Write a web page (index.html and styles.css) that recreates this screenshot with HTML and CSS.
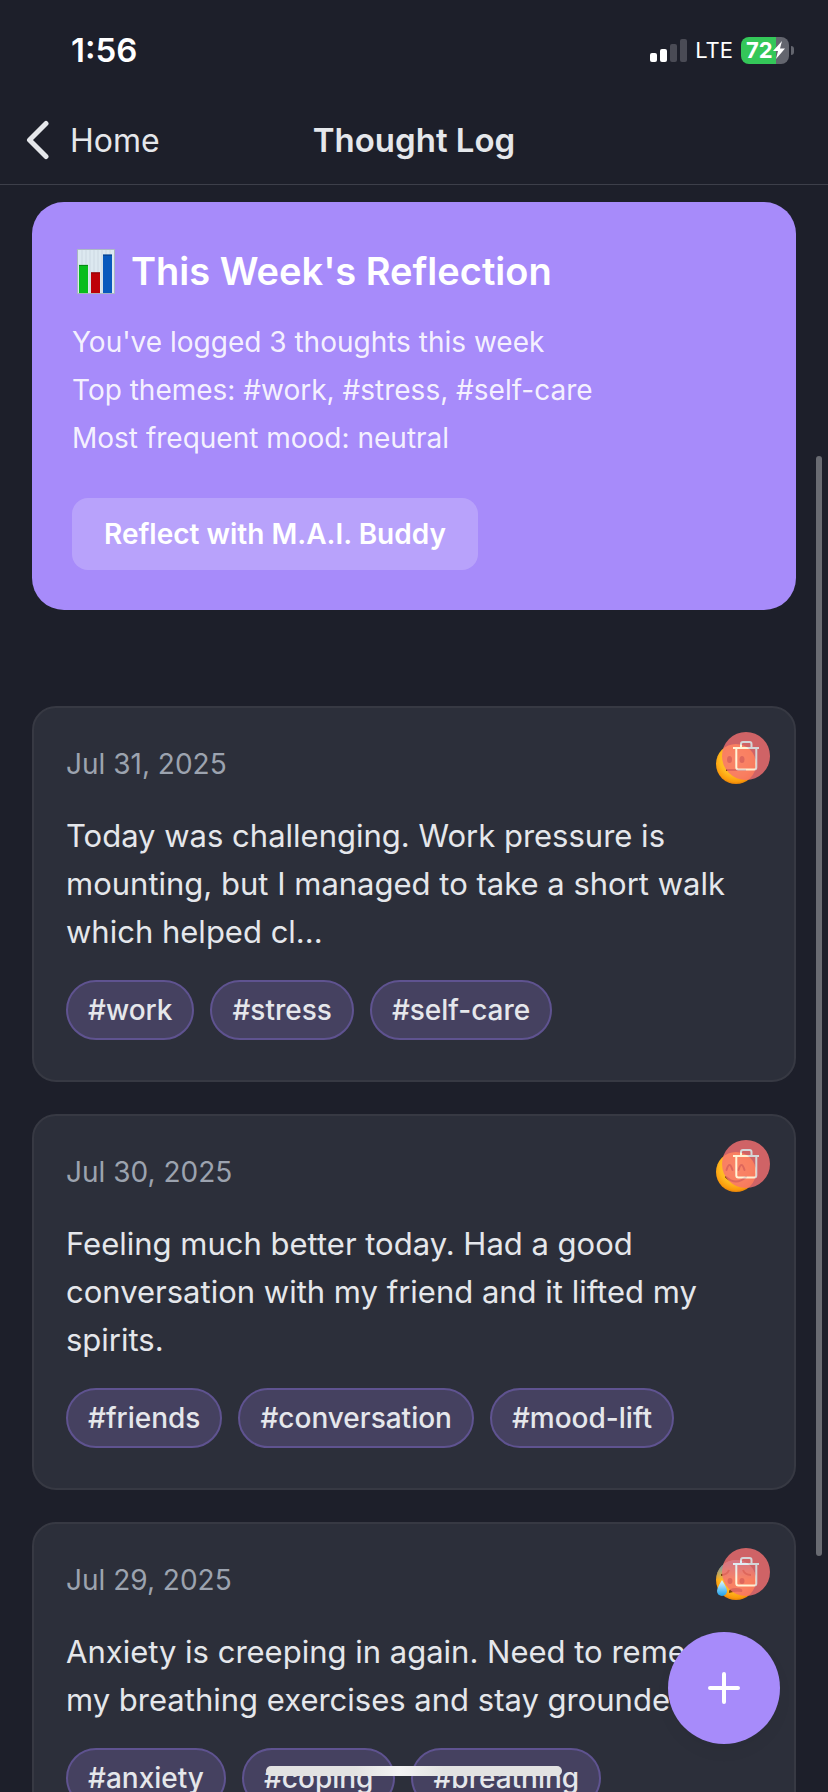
FILE: index.html
```html
<!DOCTYPE html>
<html lang="en">
<head>
<meta charset="utf-8">
<meta name="viewport" content="width=device-width, initial-scale=1">
<title>Thought Log</title>
<link rel="stylesheet" href="styles.css">
</head>
<body>
<svg class="defs" aria-hidden="true">
  <defs>
    <radialGradient id="face" cx="50%" cy="40%" r="62%">
      <stop offset="0" stop-color="#ffd84a"/>
      <stop offset="0.65" stop-color="#ffb91f"/>
      <stop offset="0.88" stop-color="#fb9a0c"/>
      <stop offset="1" stop-color="#d97706"/>
    </radialGradient>
    <linearGradient id="cold" x1="0" y1="0" x2="0" y2="1">
      <stop offset="0" stop-color="#3f8fe8"/>
      <stop offset="0.5" stop-color="#3f8fe8" stop-opacity="0"/>
    </linearGradient>
    <linearGradient id="drop" x1="0" y1="0" x2="0" y2="1">
      <stop offset="0" stop-color="#e8fbff"/>
      <stop offset="1" stop-color="#1ba1ea"/>
    </linearGradient>
    <symbol id="trash" viewBox="0 0 48 48">
      <path d="M11 16h26M14.300 16v19.500q0 2 2 2h16q2 0 2-2V16M19 15v-3q0-2 2-2h6.500q2 0 2 2v3" fill="none" stroke="#fff" stroke-width="2"/>
    </symbol>
  </defs>
</svg>
<div class="app">
  <header class="header">
    <div class="status">
      <span class="time">1:56</span>
      <div class="status-right">
        <svg class="signal" viewBox="0 0 37 23" aria-hidden="true">
          <rect x="0" y="14" width="7" height="9" rx="2" fill="#fff"/>
          <rect x="10" y="10" width="7" height="13" rx="2" fill="#fff"/>
          <rect x="20" y="5" width="7" height="18" rx="2" fill="#4a4b55"/>
          <rect x="30" y="0" width="7" height="23" rx="2" fill="#4a4b55"/>
        </svg>
        <span class="network">LTE</span>
        <div class="battery">
          <span class="level">72</span>
          <svg class="bolt" viewBox="0 0 12 18" aria-hidden="true"><path d="M9 0 0 10h5L3 18l9-10.500H7z" fill="#fff"/></svg>
        </div>
      </div>
    </div>
    <nav class="nav">
      <a class="back" href="#">
        <svg class="chevron" viewBox="0 0 24 40" aria-hidden="true"><path d="M20 3.500 3.500 20 20 36.500" fill="none" stroke="currentColor" stroke-width="5" stroke-linecap="round" stroke-linejoin="round"/></svg>
        <span>Home</span>
      </a>
      <h1 class="title">Thought Log</h1>
    </nav>
  </header>

  <main class="content">
    <section class="summary">
      <h2 class="summary-title">
        <svg class="chart" viewBox="0 0 38 48" preserveAspectRatio="none" aria-hidden="true">
          <rect width="38" height="48" fill="#a9b6c2"/>
          <rect x="1" y="1" width="36" height="46" fill="#dce8f0"/>
          <path d="M5 1v46M9 1v46M13 1v46M17 1v46M21 1v46M25 1v46M29 1v46M33 1v46" stroke="#cbd8e2" stroke-width="1"/>
          <rect x="2" y="17" width="9" height="30" fill="#08bd1c"/><rect x="2" y="17" width="9" height="1" fill="#078314"/>
          <rect x="14" y="25" width="9" height="22" fill="#bd0208"/><rect x="14" y="25" width="9" height="1" fill="#810307"/>
          <rect x="26" y="6" width="9" height="41" fill="#0758bd"/><rect x="26" y="6" width="9" height="1" fill="#053a80"/>
        </svg>
        <span>This Week's Reflection</span>
      </h2>
      <p class="summary-line">You've logged 3 thoughts this week</p>
      <p class="summary-line">Top themes: #work, #stress, #self-care</p>
      <p class="summary-line">Most frequent mood: neutral</p>
      <button class="reflect" type="button">Reflect with M.A.I. Buddy</button>
    </section>

    <section class="entries">
      <article class="entry">
        <div class="entry-head">
          <time class="date" datetime="2025-07-31">Jul 31, 2025</time>
          <svg class="mood" viewBox="0 0 40 40" role="img" aria-label="neutral">
            <circle cx="20" cy="20" r="20" fill="url(#face)"/>
            <ellipse cx="13.500" cy="15.500" rx="2.500" ry="3.500" fill="#7a4208"/><ellipse cx="26" cy="15.500" rx="2.500" ry="3.500" fill="#7a4208"/>
            <path d="M10 26h20" stroke="#7a4208" stroke-width="2"/>
          </svg>
        </div>
        <button class="delete" type="button" aria-label="Delete entry"><svg class="trash" aria-hidden="true"><use href="#trash"/></svg></button>
        <p class="text">Today was challenging. Work pressure is mounting, but I managed to take a short walk which helped cl...</p>
        <div class="tags"><span class="tag">#work</span><span class="tag">#stress</span><span class="tag">#self-care</span></div>
      </article>

      <article class="entry">
        <div class="entry-head">
          <time class="date" datetime="2025-07-30">Jul 30, 2025</time>
          <svg class="mood" viewBox="0 0 40 40" role="img" aria-label="happy">
            <circle cx="20" cy="20" r="20" fill="url(#face)"/>
            <path d="M10.500 18q3-10 6 0M22.500 18q3-10 6 0M10 25q10 9 20 0" fill="none" stroke="#7a4208" stroke-width="2" stroke-linecap="round"/>
          </svg>
        </div>
        <button class="delete" type="button" aria-label="Delete entry"><svg class="trash" aria-hidden="true"><use href="#trash"/></svg></button>
        <p class="text">Feeling much better today. Had a good conversation with my friend and it lifted my spirits.</p>
        <div class="tags"><span class="tag">#friends</span><span class="tag">#conversation</span><span class="tag">#mood-lift</span></div>
      </article>

      <article class="entry">
        <div class="entry-head">
          <time class="date" datetime="2025-07-29">Jul 29, 2025</time>
          <svg class="mood" viewBox="0 0 40 40" role="img" aria-label="anxious">
            <circle cx="20" cy="20" r="20" fill="url(#face)"/>
            <circle cx="20" cy="20" r="20" fill="url(#cold)"/>
            <path d="M5 15q6 0 8-5M27 10q2 5 8 5" fill="none" stroke="#7a4208" stroke-width="2"/>
            <ellipse cx="14" cy="21" rx="2.500" ry="3" fill="#7a4208"/><ellipse cx="26" cy="21" rx="2.500" ry="3" fill="#7a4208"/>
            <path d="M13 33q-1-5 7-5t6 4q-7-1-13 1z" fill="#7a4208"/>
            <path d="M6 20q-5 8-5 11a5 5 0 0 0 10 0q0-3-5-11z" fill="url(#drop)"/>
          </svg>
        </div>
        <button class="delete" type="button" aria-label="Delete entry"><svg class="trash" aria-hidden="true"><use href="#trash"/></svg></button>
        <p class="text">Anxiety is creeping in again. Need to remember my breathing exercises and stay grounded.</p>
        <div class="tags"><span class="tag">#anxiety</span><span class="tag">#coping</span><span class="tag">#breathing</span></div>
      </article>
    </section>
  </main>

  <div class="scrollbar"></div>
  <button class="add" type="button" aria-label="Add thought"><svg class="plus" viewBox="0 0 32 32" aria-hidden="true"><path d="M16 2v28M2 16h28" stroke="#fff" stroke-width="4" stroke-linecap="round"/></svg></button>
  <div class="home-indicator"></div>
</div>
</body>
</html>
```
FILE: styles.css
```css
* { box-sizing: border-box; }
body {
  margin: 0;
  background: #1d1f2a;
  color: #e5e7eb;
  font-family: Inter, "Liberation Sans", sans-serif;
}
h1, h2, p { margin: 0; }
button { border: 0; padding: 0; font: inherit; color: inherit; cursor: pointer; }
svg { display: block; }
.defs { position: absolute; width: 0; height: 0; }

.app {
  position: relative;
  display: flex;
  flex-direction: column;
  height: 100vh;
  overflow: hidden;
}

.header { flex: none; border-bottom: 1px solid #3d3f4a; }
.status {
  display: flex;
  align-items: center;
  justify-content: space-between;
  height: 100px;
  padding: 0 34px 0 71px;
  color: #fff;
}
.time { font-size: 33px; font-weight: 600; }
.status-right { display: flex; align-items: center; gap: 8px; }
.signal { width: 37px; height: 23px; }
.network { font-size: 22px; font-weight: 400; }
.battery {
  position: relative;
  display: flex;
  align-items: center;
  width: 48px;
  height: 27px;
  margin-right: 5px;
  padding-left: 5px;
  border-radius: 8px;
  background: linear-gradient(90deg, #34c759 73%, #63656e 73%);
}
.battery::after {
  content: "";
  position: absolute;
  left: 50px;
  top: 9px;
  width: 3px;
  height: 9px;
  border-radius: 0 3px 3px 0;
  background: #63656e;
}
.level { font-size: 22px; font-weight: 700; line-height: 27px; }
.bolt { flex: none; width: 12px; height: 18px; }

.nav {
  display: grid;
  grid-template-columns: 1fr auto 1fr;
  align-items: center;
  height: 84px;
  padding: 0 26px 4px;
}
.back {
  display: flex;
  align-items: center;
  gap: 20px;
  color: inherit;
  font-size: 32px;
  text-decoration: none;
}
.chevron { width: 24px; height: 40px; }
.title { font-size: 33px; font-weight: 600; }

.content {
  flex: 1;
  min-height: 0;
  overflow-y: auto;
  scrollbar-width: none;
  padding: 17px 32px 0;
}

.summary {
  margin-bottom: 96px;
  padding: 40px;
  border-radius: 32px;
  background: #a78bfa;
  color: #fff;
}
.summary-title {
  display: flex;
  align-items: center;
  gap: 16px;
  margin-bottom: 18px;
  padding-left: 5px;
  font-size: 38px;
  font-weight: 600;
  line-height: 58px;
}
.chart { flex: none; width: 38px; height: 45px; }
.summary-line {
  font-size: 28px;
  font-weight: 400;
  line-height: 48px;
  color: rgba(255, 255, 255, 0.9);
}
.reflect {
  display: block;
  height: 72px;
  margin-top: 36px;
  padding: 0 32px;
  border-radius: 16px;
  background: rgba(255, 255, 255, 0.2);
  font-size: 28px;
  font-weight: 600;
}

.entries { display: flex; flex-direction: column; gap: 32px; }
.entry {
  position: relative;
  padding: 32px 32px 40px;
  border: 2px solid #373943;
  border-radius: 24px;
  background: #2c2f3a;
}
.entry-head {
  display: flex;
  align-items: center;
  justify-content: space-between;
  height: 48px;
  margin-bottom: 24px;
}
.date { font-size: 28px; font-weight: 400; color: #9ca3af; }
.mood { width: 40px; height: 40px; margin-right: 6px; }
.delete {
  position: absolute;
  top: 24px;
  right: 24px;
  width: 48px;
  height: 48px;
  border-radius: 50%;
  background: #f87171;
  opacity: 0.8;
}
.trash { width: 48px; height: 48px; }
.text { font-size: 31px; line-height: 48px; }
.tags { display: flex; gap: 16px; margin-top: 24px; }
.tag {
  padding: 0 20px;
  border: 2px solid #5f5390;
  border-radius: 30px;
  background: #454160;
  font-size: 28px;
  font-weight: 500;
  line-height: 56px;
}

.scrollbar {
  position: absolute;
  right: 6px;
  top: 456px;
  bottom: 236px;
  width: 6px;
  border-radius: 3px;
  background: #696b72;
}
.add {
  position: absolute;
  right: 48px;
  bottom: 48px;
  display: grid;
  place-items: center;
  width: 112px;
  height: 112px;
  border-radius: 50%;
  background: #a78bfa;
  box-shadow: 0 8px 16px rgba(0, 0, 0, 0.04);
}
.plus { width: 32px; height: 32px; }
.home-indicator {
  position: absolute;
  left: 50%;
  bottom: 16px;
  width: 296px;
  height: 10px;
  margin-left: -148px;
  border-radius: 5px;
  background: linear-gradient(90deg, #e2e2e2 30%, #f3f3f3 45%, #e2e2e2 60%);
}
```
